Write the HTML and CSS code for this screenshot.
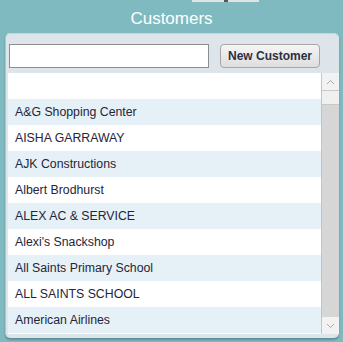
FILE: index.html
```html
<!DOCTYPE html>
<html>
<head>
<title>Customers</title>
<link rel="stylesheet" href="styles.css">
</head>
<body>

<div class="topTab"><div class="topTabKnob"></div></div>
<div class="header">Customers</div>

<div class="panel">
    <div class="searchRow">
        <input class="searchBox">
        <button class="newBtn">New Customer</button>
    </div>

    <div class="listWrap">
        <div class="list">
            <div class="row"></div>
            <div class="row alt">A&amp;G Shopping Center</div>
            <div class="row">AISHA GARRAWAY</div>
            <div class="row alt">AJK Constructions</div>
            <div class="row">Albert Brodhurst</div>
            <div class="row alt">ALEX AC &amp; SERVICE</div>
            <div class="row">Alexi's Snackshop</div>
            <div class="row alt">All Saints Primary School</div>
            <div class="row">ALL SAINTS SCHOOL</div>
            <div class="row alt">American Airlines</div>
        </div>
        <div class="scrollbar">
            <div class="scrollBtn">
                <svg width="9" height="6" viewBox="0 0 9 6"><path d="M1 5 L4.5 1.5 L8 5" fill="none" stroke="#a0a8b0" stroke-width="1"/></svg>
            </div>
            <div class="scrollThumb"></div>
            <div class="scrollTrack"></div>
            <div class="scrollBtn">
                <svg width="9" height="6" viewBox="0 0 9 6"><path d="M1 1 L4.5 4.5 L8 1" fill="none" stroke="#a0a8b0" stroke-width="1"/></svg>
            </div>
        </div>
    </div>
</div>

</body>
</html>
```

FILE: styles.css
```css
body{
    margin:0;
    font-family:"Liberation Sans", Arial, sans-serif;
    background:#7fbac1;
    width:343px;
    height:342px;
    overflow:hidden;
}
.topTab{
    margin-left:192px;
    width:67px;
    height:2px;
    background:#e2e4e4;
    display:flex;
    justify-content:center;
}
.topTabKnob{
    width:4px;
    height:2px;
    background:#555;
}
.header{
    height:31px;
    box-sizing:border-box;
    padding-top:7px;
    text-align:center;
    color:#ffffff;
    font-size:17px;
    line-height:20px;
}
.panel{
    margin:0 4px 0 5px;
    height:305px;
    background:#dde4ea;
    border-radius:5px;
    border-left:1px solid #b5c3c8;
    border-top:1px solid #c9d4d8;
    box-shadow:0 2px 2px rgba(60,90,100,0.45);
    padding:9px 0 0 2px;
    box-sizing:border-box;
}
.searchRow{
    display:flex;
    align-items:center;
    height:25px;
    margin-bottom:5px;
}
.searchBox{
    width:200px;
    height:24px;
    margin-left:1px;
    border:1px solid #8e8e8e;
    background:#ffffff;
    box-sizing:border-box;
    padding:0 4px;
}
.newBtn{
    margin-left:11px;
    width:100px;
    height:24px;
    border:1px solid #a6a6a6;
    border-radius:4px;
    background:linear-gradient(#f5f5f5, #dedede);
    font-family:"Liberation Sans", Arial, sans-serif;
    font-size:12px;
    font-weight:bold;
    color:#2c3040;
    padding:0;
}
.listWrap{
    display:flex;
    height:261px;
}
.list{
    width:313px;
    background:#ffffff;
}
.row{
    height:26px;
    line-height:26px;
    padding-left:7px;
    font-size:12.3px;
    color:#25253a;
    background:#ffffff;
}
.alt{
    background:#e5f1f7;
}
.scrollbar{
    width:17px;
    display:flex;
    flex-direction:column;
    background:#d6d6d6;
    border-left:1px solid #c4c4c4;
}
.scrollBtn{
    height:17px;
    background:#f2f2f2;
    display:flex;
    align-items:center;
    justify-content:center;
}
.scrollThumb{
    height:13px;
    background:#f0f0f0;
    border-top:1px solid #c8c8c8;
    border-bottom:1px solid #c8c8c8;
}
.scrollTrack{
    flex:1;
}
```
